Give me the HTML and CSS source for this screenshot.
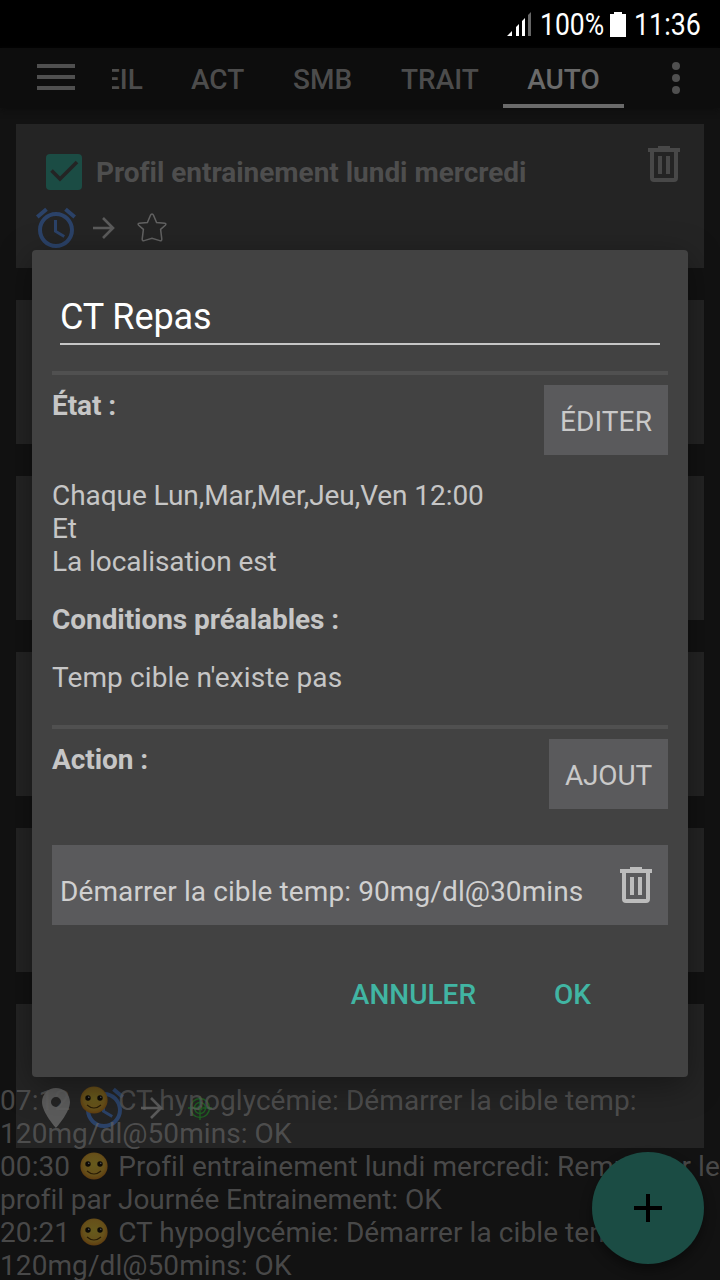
FILE: index.html
```html
<!DOCTYPE html>
<html lang="fr">
<head>
<meta charset="utf-8">
<title>Automation</title>
<link rel="stylesheet" href="styles.css">
</head>
<body>
<svg class="defs" width="0" height="0">
  <defs>
    <symbol id="trash" viewBox="0 0 32 36"><path d="M10 0h12v2h10v4h-2v26q0 4-4 4H6q-4 0-4-4V6H0V2h10zM6 6v26h20V6z" fill-rule="evenodd"/><path d="M10 10h4v18h-4zM18 10h4v18h-4z"/></symbol>
    <symbol id="alarm" viewBox="0 0 24 24"><path d="M22 5.72l-4.6-3.86-1.29 1.53 4.6 3.86L22 5.72zM7.88 3.39L6.6 1.86 2 5.71l1.29 1.53 4.59-3.85zM12.5 8H11v6l4.75 2.85.75-1.23-4-2.37V8zM12 4c-4.97 0-9 4.03-9 9s4.02 9 9 9c4.97 0 9-4.03 9-9s-4.03-9-9-9zm0 16c-3.87 0-7-3.13-7-7s3.13-7 7-7 7 3.13 7 7-3.13 7-7 7z"/></symbol>
    <symbol id="arrow" viewBox="0 0 22 22"><path d="M0 11h20M10 1l10 10-10 10" fill="none" stroke="currentColor" stroke-width="2.6"/></symbol>
    <radialGradient id="face" cx=".5" cy=".45" r=".6"><stop offset="0" stop-color="#665a1c"/><stop offset=".65" stop-color="#66501a"/><stop offset="1" stop-color="#5c360c"/></radialGradient>
    <symbol id="smile" viewBox="0 0 28 28"><circle cx="14" cy="14" r="13.6" fill="url(#face)"/><circle cx="8" cy="12" r="2.7" fill="#0c0a06"/><circle cx="20" cy="12" r="2.700" fill="#0c0a06"/><circle cx="8.800" cy="11.200" r=".7" fill="#666"/><circle cx="20.800" cy="11.200" r=".7" fill="#666"/><path d="M7 19q7 6 14 0" fill="none" stroke="#291c06" stroke-width="1.100"/></symbol>
  </defs>
</svg>
<div class="screen">
  <header class="status">
    <svg class="signal" width="25" height="24" viewBox="0 0 25 24"><path d="M0 24l5-5v5zM9 15l3-3v12H9zM15 9l3-3v18h-3z" fill="#fff"/><path d="M21 3l3-3v24h-3z" fill="#666"/></svg>
    <span class="percent">100%</span>
    <svg class="battery" width="16" height="25" viewBox="0 0 16 25"><path d="M4 0h8v2h4v23H0V2h4z" fill="#fff"/></svg>
    <span class="clock">11:36</span>
  </header>
  <nav class="toolbar">
    <div class="burger"><i></i><i></i><i></i></div>
    <div class="tabs">
      <span class="tab first">EIL</span>
      <span class="tab act">ACT</span>
      <span class="tab smb">SMB</span>
      <span class="tab trait">TRAIT</span>
      <span class="tab active">AUTO</span>
    </div>
    <div class="more"><i></i><i></i><i></i></div>
  </nav>
  <main class="list">
    <section class="card">
      <div class="card-head">
        <svg class="check" width="36" height="36" viewBox="0 0 36 36"><rect width="36" height="36" rx="4" fill="#1b4c44"/><path d="M5.500 16.500l8.500 8.500L31 8" fill="none" stroke="#242424" stroke-width="3.600"/></svg>
        <span class="card-title">Profil entrainement lundi mercredi</span>
        <svg class="card-trash" width="32" height="36"><use href="#trash"/></svg>
      </div>
      <div class="card-icons">
        <svg class="ic-alarm" width="48" height="48"><use href="#alarm"/></svg>
        <svg class="ic-arrow" width="22" height="22"><use href="#arrow"/></svg>
        <svg class="ic-star" width="30" height="30" viewBox="0 0 30 30"><path d="M15 1q1 0 1.500 1.200l3.100 7.300 8.200.8q1.900.4.500 1.900l-4.700 4.200 1.200 9.700q-.1 2.200-2 1.500L15 25.200l-7.800 2.400q-1.900.7-2-1.500l1.200-9.700L1.700 12.200q-1.400-1.500.5-1.900l8.200-.8 3.100-7.300Q14 1 15 1z" fill="none" stroke="#626262" stroke-width="1.500"/></svg>
      </div>
    </section>
    <section class="card"></section>
    <section class="card"></section>
    <section class="card"></section>
    <section class="card"></section>
    <section class="card last">
      <div class="card-icons">
        <svg class="ic-pin" width="28" height="40" viewBox="0 0 28 40"><path d="M14 0C6.300 0 0 6.200 0 14c0 10.500 14 26 14 26s14-15.500 14-26C28 6.200 21.700 0 14 0zm0 19a5 5 0 1 1 0-10 5 5 0 0 1 0 10z" fill="#5b5b5b"/></svg>
        <svg class="ic-alarm" width="48" height="48"><use href="#alarm"/></svg>
        <svg class="ic-arrow" width="22" height="22"><use href="#arrow"/></svg>
        <svg class="ic-target" width="24" height="24" viewBox="0 0 24 24" fill="none" stroke="#1e5f22" stroke-width="1.400"><circle cx="12" cy="12" r="9.500"/><circle cx="12" cy="12" r="5.500"/><circle cx="12" cy="12" r="2"/><path d="M12 0v9M12 15v9M0 12h9M15 12h9"/></svg>
      </div>
    </section>
  </main>
  <div class="log">
    <p>07:12 <svg class="emoji"><use href="#smile"/></svg> CT hypoglycémie: Démarrer la cible temp:<br>120mg/dl@50mins: OK</p>
    <p>00:30 <svg class="emoji"><use href="#smile"/></svg> Profil entrainement lundi mercredi: Remplacer le<br><span class="tight">profil par Journée Entrainement: OK</span></p>
    <p>20:21 <svg class="emoji"><use href="#smile"/></svg> CT hypoglycémie: Démarrer la cible temp:<br>120mg/dl@50mins: OK</p>
  </div>
  <div class="fab"><svg width="28" height="28" viewBox="0 0 28 28"><path d="M12 0h4v12h12v4H16v12h-4V16H0v-4h12z"/></svg></div>
  <div class="dialog">
    <div class="field">CT Repas</div>
    <div class="rule"></div>
    <div class="row"><h2>État :</h2><button class="edit">ÉDITER</button></div>
    <p class="trigger">Chaque Lun,Mar,Mer,Jeu,Ven 12:00<br>Et<br>La localisation est</p>
    <h2 class="precond">Conditions préalables :</h2>
    <p class="target">Temp cible n'existe pas</p>
    <div class="rule"></div>
    <div class="row"><h2>Action :</h2><button class="add">AJOUT</button></div>
    <div class="item"><span>Démarrer la cible temp: 90mg/dl@30mins</span><svg width="32" height="36"><use href="#trash"/></svg></div>
    <div class="actions"><span>ANNULER</span><span>OK</span></div>
  </div>
</div>
</body>
</html>
```
FILE: styles.css
```css
* { box-sizing: border-box; }
body { margin: 0; background: #121212; font: 28px/33px Roboto, "Noto Sans", sans-serif; }
p, h2 { margin: 0; font-size: 28px; line-height: 33px; }
h2 { letter-spacing: -.06px; }
svg { display: block; flex: none; }
.defs { position: absolute; }
.screen { position: relative; width: 720px; height: 1280px; overflow: hidden; background: #121212; }

.status { display: flex; height: 48px; background: #000; color: #fff; font-size: 31px; line-height: 50px; padding-left: 507px; white-space: nowrap; }
.signal { margin-top: 12px; }
.percent { width: 64px; margin-left: 8px; transform: scaleX(.855); transform-origin: left; }
.battery { margin: 12px 0 0 6px; }
.clock { margin-left: 8px; transform: scaleX(.865); transform-origin: left; }

.toolbar { display: flex; height: 60px; background: #0d0d0d; padding-left: 37px; box-shadow: 0 2px 6px #0d0d0d; }
.burger { display: flex; flex-direction: column; gap: 7px; padding-top: 16px; width: 75px; }
.burger i { width: 38px; height: 4px; background: #4f4f4f; }
.tabs { display: flex; width: 512px; overflow: hidden; color: #4c4c4c; font-weight: 500; line-height: 63px; white-space: nowrap; }
.tab { flex: none; }
.first { width: 79px; text-indent: -8px; }
.act { width: 102px; }
.smb { width: 108px; }
.trait { width: 102px; }
.active { width: 121px; text-align: center; color: #6a6a6a; height: 60px; border-bottom: 4px solid #6a6a6a; }
.more { display: flex; flex-direction: column; gap: 4px; padding-top: 14px; margin-left: 48px; }
.more i { width: 8px; height: 8px; border-radius: 50%; background: #4f4f4f; }

.list { display: flex; flex-direction: column; gap: 32px; padding: 16px 16px 0; }
.card { height: 144px; flex: none; background: #242424; }
.card-head { display: flex; height: 80px; padding: 22px 24px 0 30px; }
.check { margin-top: 8px; }
.card-title { flex: 1; margin: 10px 0 0 14px; color: #4e4e4e; font-weight: 700; letter-spacing: -.03px; white-space: nowrap; }
.card-trash { fill: #484848; }
.card-icons { display: flex; height: 48px; align-items: center; padding-left: 16px; }
.ic-alarm { fill: #2b4268; }
.ic-arrow { color: #5b5b5b; margin-left: 13px; }
.ic-star { margin-left: 22px; }
.last { padding-top: 80px; }
.last .card-icons { padding-left: 26px; }
.last .ic-alarm { margin-left: 10px; }
.ic-target { margin-left: 25px; }

.log { position: absolute; left: 0; top: 1084px; width: 720px; color: rgba(97, 97, 97, .7); letter-spacing: .08px; white-space: nowrap; }
.tight { letter-spacing: -.05px; }
.emoji { display: inline-block; width: 28px; height: 28px; margin: 0 3px; vertical-align: -4px; }

.fab { position: absolute; left: 592px; top: 1152px; width: 112px; height: 112px; border-radius: 50%; background: #1b4c44; display: flex; align-items: center; justify-content: center; box-shadow: 0 6px 12px rgba(0,0,0,.4); }

.dialog { position: absolute; left: 32px; top: 250px; width: 656px; height: 827px; padding: 40px 20px 0; border-radius: 4px; background: #424242; color: #c6c6c6; box-shadow: 0 8px 34px rgba(0,0,0,.38); }
.field { height: 55px; margin: 0 8px 26px; border-bottom: 2px solid #c6c6c6; color: #fff; font-size: 36px; line-height: 55px; letter-spacing: -.1px; }
.rule { height: 4px; background: #505050; }
.row { display: flex; justify-content: space-between; margin-top: 10px; height: 70px; }
.row h2 { margin-top: 4px; }
button { border: 0; padding: 2px 0 0; background: #5a5a5c; color: #c9c9c9; font: 28px Roboto, sans-serif; }
.edit { width: 124px; letter-spacing: .1px; }
.add { width: 119px; letter-spacing: -.15px; }
.trigger { margin-top: 24px; letter-spacing: -.07px; }
.precond { margin-top: 25px; }
.target { margin: 25px 0 31px; letter-spacing: .11px; }
.item { display: flex; justify-content: space-between; height: 80px; margin-top: 36px; padding: 22px 16px 0 8px; background: #5a5a5c; color: #d0d0d0; fill: #bcbcbc; }
.item span { margin-top: 8px; letter-spacing: .1px; white-space: nowrap; }
.actions { display: flex; justify-content: flex-end; gap: 78px; margin-top: 53px; padding-right: 77px; color: #41b5a3; font-weight: 500; }
```
